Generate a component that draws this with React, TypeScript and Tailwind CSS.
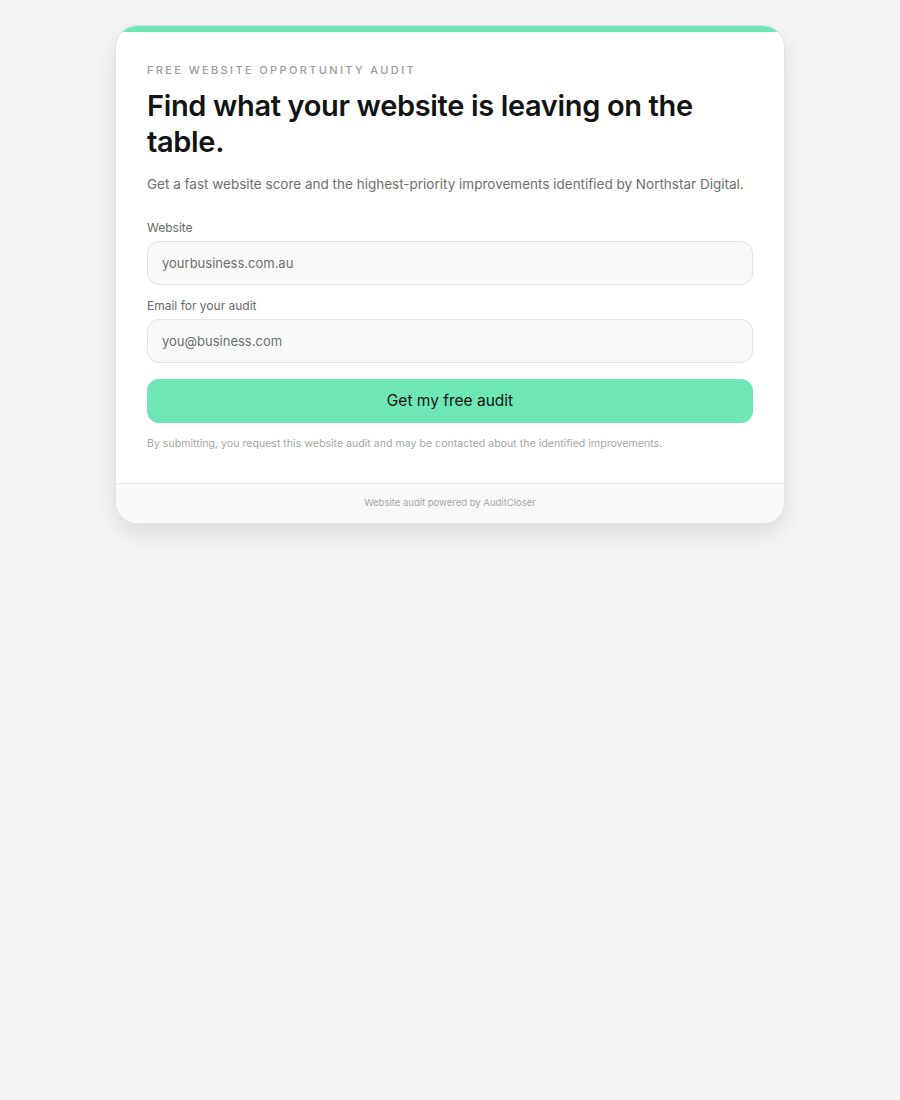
import React from "react";

const font = { fontFamily: "Inter, 'Noto Sans', sans-serif" };

const Field: React.FC<{ label: string; placeholder: string; type?: string }> = ({
  label,
  placeholder,
  type = "text",
}) => (
  <div className="flex flex-col">
    <label className="text-[12px] leading-4 text-[#666a68] mb-[5px]">{label}</label>
    <input
      type={type}
      placeholder={placeholder}
      className="h-[44px] w-full rounded-[12px] border border-[#e1e4e2] bg-[#f8f9f8] px-[14px] text-[13px] text-[#333] placeholder:text-[#6b6f6d] outline-none"
    />
  </div>
);

export default function App() {
  return (
    <div className="min-h-[1100px] w-full bg-[#f3f4f3] pt-[25px]" style={font}>
      <div className="mx-auto w-[670px] overflow-hidden rounded-[22px] border border-[#e2e4e3] bg-white shadow-[0_10px_24px_rgba(0,0,0,0.10)]">
        <div className="h-[6px] bg-[#6ee7b7]" />
        <div className="px-[31px] pt-[30px] pb-[31px]">
          <p className="text-[11px] font-medium leading-4 tracking-[0.215em] text-[#999c9a]">
            FREE WEBSITE OPPORTUNITY AUDIT
          </p>
          <h1 className="mt-[10px] text-[29px] font-semibold leading-[36px] tracking-[-0.012em] text-[#111412]">
            Find what your website is leaving on the table.
          </h1>
          <p className="mt-[14px] text-[13.5px] leading-5 text-[#6b6f6d]">
            Get a fast website score and the highest-priority improvements identified by Northstar Digital.
          </p>
          <div className="mt-[26px] flex flex-col gap-[13px]">
            <Field label="Website" placeholder="yourbusiness.com.au" />
            <Field label="Email for your audit" placeholder="you@business.com" type="email" />
          </div>
          <button className="mt-[16px] h-[44px] w-full rounded-[12px] bg-[#6ee7b7] text-[15.5px] text-[#0f1311]">
            Get my free audit
          </button>
          <p className="mt-[13px] text-[10.6px] leading-4 text-[#a3a6a4]">
            By submitting, you request this website audit and may be contacted about the identified improvements.
          </p>
        </div>
        <div className="flex h-[40px] items-center justify-center border-t border-[#e4e6e5] bg-[#f8f9f8] text-[9.5px] text-[#a3a6a4]">
          Website audit powered by AuditCloser
        </div>
      </div>
    </div>
  );
}
